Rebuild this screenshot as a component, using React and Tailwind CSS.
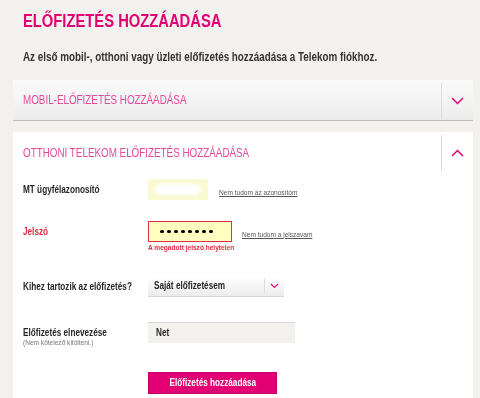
const PINK = 'text-[#e20074]';

// no narrow face installed, so squeeze the text horizontally
function N({ children, center, className = '' }) {
  return (
    <span className={`inline-block whitespace-nowrap scale-x-[0.82] ${center ? 'origin-center' : 'origin-left'} ${className}`}>
      {children}
    </span>
  );
}

function Chevron({ up }) {
  return (
    <svg width="13" height="8" viewBox="0 0 13 8" fill="none">
      <polyline
        points={up ? '1,7 6.5,1.5 12,7' : '1,1 6.5,6.5 12,1'}
        stroke="#e20074"
        strokeWidth="1.5"
      />
    </svg>
  );
}

function PanelHeader({ title, up }) {
  return (
    <div className="flex">
      <div className={`flex-1 pl-[10px] leading-[16px] text-[12px] text-[#e4489a] ${up ? 'pt-[13px] pb-[13px]' : 'pt-[12px] pb-[12px]'}`}>
        <N>{title}</N>
      </div>
      <div className={`w-[32px] border-l border-[#dcdcdc] flex items-center justify-center ${up ? 'mt-[3px] mb-[3px]' : 'mt-[3px] mb-[1px]'}`}>
        <Chevron up={up} />
      </div>
    </div>
  );
}

function Label({ children, red }) {
  return (
    <div className={`w-[125px] shrink-0 text-[10px] font-bold ${red ? 'text-[#e32b3a]' : 'text-[#262626]'}`}>
      <N>{children}</N>
    </div>
  );
}

function Link({ children }) {
  return (
    <span className="text-[8px] text-[#555]">
      <N className="underline">{children}</N>
    </span>
  );
}

export default function App() {
  return (
    <div className="min-h-screen w-[480px] bg-[#f2f1ed] font-['Liberation_Sans',Arial,sans-serif] overflow-hidden">
      <h1 className={`pl-[23px] pt-[10px] text-[18px] leading-[22px] font-bold ${PINK}`}>
        <N>ELŐFIZETÉS HOZZÁADÁSA</N>
      </h1>
      <p className="pl-[23px] mt-[17px] text-[12px] leading-[16px] font-bold text-[#333]">
        <N>Az első mobil-, otthoni vagy üzleti előfizetés hozzáadása a Telekom fiókhoz.</N>
      </p>

      <div className="ml-[13px] w-[460px] mt-[15px] bg-gradient-to-b from-[#fbfbfb] to-[#ececec] border-b border-[#bdbdbd]">
        <PanelHeader title="MOBIL-ELŐFIZETÉS HOZZÁADÁSA" />
      </div>

      <div className="ml-[13px] w-[460px] mt-[11px] bg-white pb-[20px]">
        <PanelHeader title="OTTHONI TELEKOM ELŐFIZETÉS HOZZÁADÁSA" up />

        <div className="pl-[10px] pt-[5px]">
          <div className="flex items-center h-[21px]">
            <Label>MT ügyfélazonosító</Label>
            <div className="w-[60px] h-[21px] bg-[#fafad2] relative">
              <div className="absolute left-[7px] top-[5px] w-[46px] h-[11px] rounded-full bg-white blur-[1.5px]" />
            </div>
            <div className="ml-[11px]">
              <Link>Nem tudom az azonosítóm</Link>
            </div>
          </div>

          <div className="flex items-center h-[21px] mt-[21px]">
            <Label red>Jelszó</Label>
            <div className="w-[84px] h-[21px] bg-[#ffffc2] border-[1.5px] border-[#e0303c] flex items-center gap-[3.5px] pl-[11px]">
              {[0, 1, 2, 3, 4, 5, 6, 7].map((i) => (
                <div key={i} className="w-[3.5px] h-[3.5px] rounded-full bg-black" />
              ))}
            </div>
            <div className="ml-[10px]">
              <Link>Nem tudom a jelszavam</Link>
            </div>
          </div>
          <div className="ml-[125px] mt-[1px] text-[8px] leading-[10px] font-bold text-[#e32b3a]">
            <N>A megadott jelszó helytelen</N>
          </div>

          <div className="flex items-center h-[20px] mt-[23px]">
            <Label>Kihez tartozik az előfizetés?</Label>
            <div className="w-[136px] h-[20px] flex bg-gradient-to-b from-white to-[#ececec] shadow-[0_1px_0_#d6d6d6]">
              <div className="flex-1 pl-[6px] text-[10px] font-bold text-[#262626] leading-[20px]">
                <N>Saját előfizetésem</N>
              </div>
              <div className="w-[20px] my-[3px] border-l border-[#ddd] flex items-center justify-center">
                <svg width="9" height="6" viewBox="0 0 9 6" fill="none">
                  <polyline points="1,1 4.5,4.5 8,1" stroke="#e20074" strokeWidth="1.1" />
                </svg>
              </div>
            </div>
          </div>

          <div className="flex items-start mt-[26px]">
            <div className="w-[125px] shrink-0 pt-[5px]">
              <div className="text-[10px] leading-[11px] font-bold text-[#262626]">
                <N>Előfizetés elnevezése</N>
              </div>
              <div className="text-[8px] leading-[9px] text-[#777]">
                <N>(Nem kötelező kitölteni.)</N>
              </div>
            </div>
            <div className="w-[147px] h-[21px] bg-[#f2f1ed] border-t-[1.5px] border-[#d6d6d6] pl-[8px] text-[10px] font-bold leading-[19px] text-[#262626]">
              <N>Net</N>
            </div>
          </div>

          <div className="ml-[125px] mt-[22px]">
            <button className="w-[129px] h-[22px] bg-[#e20074] border border-[#c70067] text-white text-[10px] font-bold">
              <N center>Előfizetés hozzáadása</N>
            </button>
          </div>
        </div>
      </div>
    </div>
  );
}
